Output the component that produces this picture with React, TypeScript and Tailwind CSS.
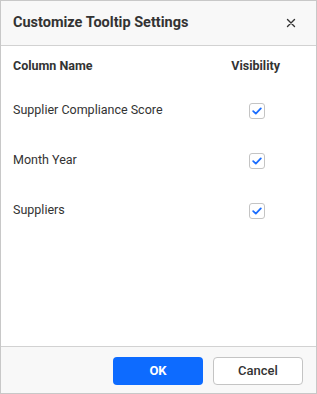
import React, { useState } from 'react';

const columns = ['Supplier Compliance Score', 'Month Year', 'Suppliers'];

const Check: React.FC<{ on: boolean; onClick: () => void }> = ({ on, onClick }) => (
  <button
    onClick={onClick}
    className="w-[16px] h-[16px] rounded-[3px] border border-[#c4c4c4] bg-white flex items-center justify-center"
  >
    {on && (
      <svg width="10" height="8" viewBox="0 0 10 8" fill="none">
        <path d="M1.2 4.2 L3.8 6.6 L8.8 1.4" stroke="#1a6dff" strokeWidth="1.8" strokeLinecap="round" strokeLinejoin="round" />
      </svg>
    )}
  </button>
);

const App: React.FC = () => {
  const [visible, setVisible] = useState([true, true, true]);

  const toggle = (i: number) => setVisible(v => v.map((x, j) => (j === i ? !x : x)));

  return (
    <div className="w-[317px] h-[394px] border border-[#c8c8c8] bg-white flex flex-col text-[#333] font-['Roboto',sans-serif]">
      {/* Header */}
      <div className="h-[45px] shrink-0 bg-[#f8f8f8] border-b border-[#d2d2d2] flex items-center justify-between pl-[12px] pr-[20px]">
        <span className="text-[14.5px] font-bold text-[#333]">Customize Tooltip Settings</span>
        <svg width="10" height="10" viewBox="0 0 10 10" fill="none">
          <path d="M1.5 1.5 L8.5 8.5 M8.5 1.5 L1.5 8.5" stroke="#333" strokeWidth="1.4" strokeLinecap="round" />
        </svg>
      </div>

      {/* Body */}
      <div className="flex-1 px-[12px]">
        <div className="flex items-center justify-between h-[39px] pt-[2px] text-[12.5px] font-bold">
          <span>Column Name</span>
          <span className="mr-[24px]">Visibility</span>
        </div>
        {columns.map((c, i) => (
          <div key={c} className="flex items-center justify-between h-[50px] text-[12.5px]">
            <span>{c}</span>
            <div className="mr-[39px] mt-[1px]">
              <Check on={visible[i]} onClick={() => toggle(i)} />
            </div>
          </div>
        ))}
      </div>

      {/* Footer */}
      <div className="h-[47px] shrink-0 bg-[#f8f8f8] border-t border-[#d2d2d2] flex items-center justify-end gap-[10px] pr-[13px] pt-[2px]">
        <button className="w-[90px] h-[28px] rounded-[4px] bg-[#0d6bff] text-white text-[13px] font-bold">OK</button>
        <button className="w-[90px] h-[28px] rounded-[4px] bg-white border border-[#c4c4c4] text-[#333] text-[13px] font-medium">
          Cancel
        </button>
      </div>
    </div>
  );
};

export default App;
